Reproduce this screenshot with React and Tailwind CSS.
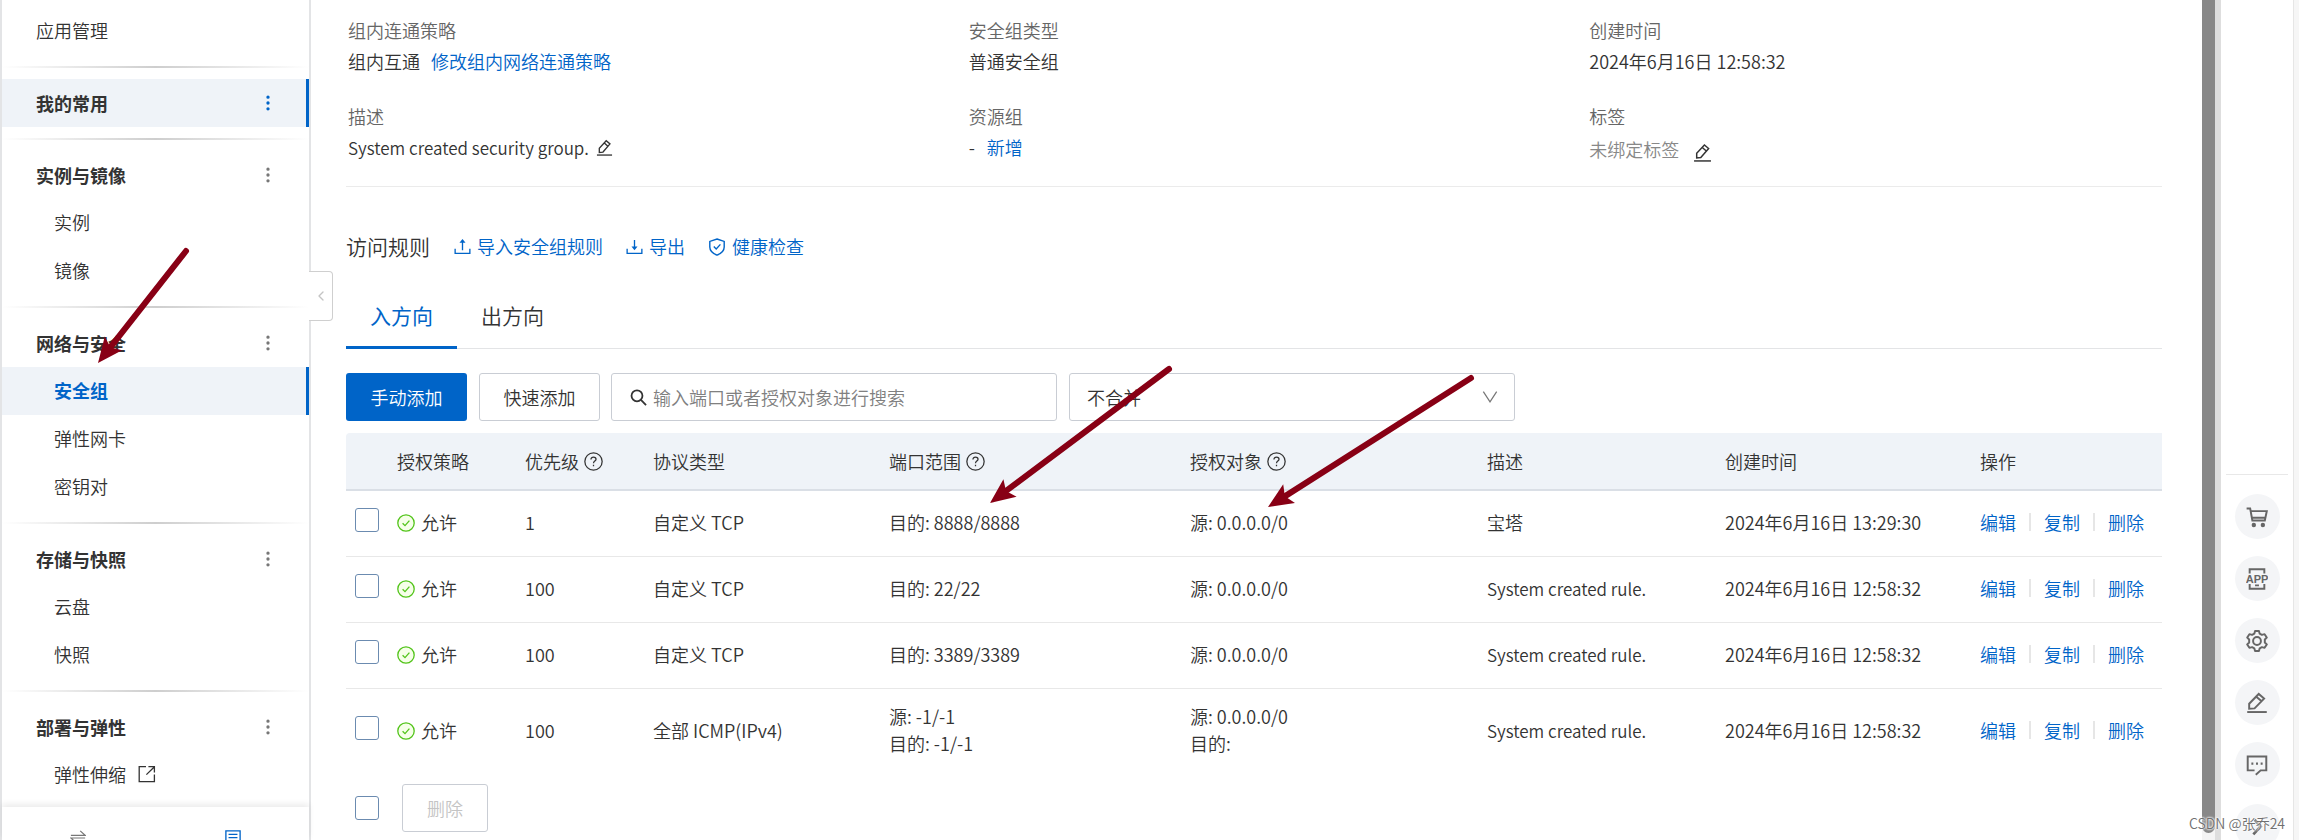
import React, { useState } from "react";
import { ChevronLeft, EllipsisVertical } from "lucide-react";

const navGroups = [
  { title: "实例与镜像", items: [{ name: "实例" }, { name: "镜像" }] },
  {
    title: "网络与安全",
    items: [{ name: "安全组", active: true }, { name: "弹性网卡" }, { name: "密钥对" }],
  },
  { title: "存储与快照", items: [{ name: "云盘" }, { name: "快照" }] },
  { title: "部署与弹性", items: [{ name: "弹性伸缩", external: true }] },
];

const rules = [
  { id: 1, priority: "1", protocol: "自定义 TCP", ports: ["目的: 8888/8888"], targets: ["源: 0.0.0.0/0"], desc: "宝塔", time: "2024年6月16日 13:29:30" },
  { id: 2, priority: "100", protocol: "自定义 TCP", ports: ["目的: 22/22"], targets: ["源: 0.0.0.0/0"], desc: "System created rule.", time: "2024年6月16日 12:58:32" },
  { id: 3, priority: "100", protocol: "自定义 TCP", ports: ["目的: 3389/3389"], targets: ["源: 0.0.0.0/0"], desc: "System created rule.", time: "2024年6月16日 12:58:32" },
  { id: 4, priority: "100", protocol: "全部 ICMP(IPv4)", ports: ["源: -1/-1", "目的: -1/-1"], targets: ["源: 0.0.0.0/0", "目的:"], desc: "System created rule.", time: "2024年6月16日 12:58:32" },
];

const columns = [
  { name: "授权策略", width: "w-[128px]" },
  { name: "优先级", width: "w-[128px]", help: true },
  { name: "协议类型", width: "w-[236px]" },
  { name: "端口范围", width: "w-[301px]", help: true },
  { name: "授权对象", width: "w-[297px]", help: true },
  { name: "描述", width: "w-[238px]" },
  { name: "创建时间", width: "w-[255px]" },
  { name: "操作", width: "w-[194px]" },
];

// small line icons, all stroked with the text colour
function Icon({ children, className = "", strokeWidth = 1.4 }) {
  return (
    <svg
      viewBox="0 0 18 18"
      fill="none"
      stroke="currentColor"
      strokeWidth={strokeWidth}
      className={`shrink-0 ${className}`}
      aria-hidden="true"
    >
      {children}
    </svg>
  );
}

function PencilIcon({ className, strokeWidth }) {
  return (
    <Icon className={className} strokeWidth={strokeWidth}>
      <path d="M3.5 14.2V9.8L10.8 1.8L14.8 5.2L7.4 13.8L3.5 14.2ZM8.8 4.2L12.6 7.6" />
      <path d="M1 17H17" />
    </Icon>
  );
}

function HelpIcon() {
  return (
    <Icon className="size-[19px]" strokeWidth={1.2}>
      <circle cx="9" cy="9" r="8.2" />
      <path d="M6.6 7.2C6.6 5.6 7.6 4.8 9 4.8C10.4 4.8 11.4 5.7 11.4 6.9C11.4 8.6 9 8.6 9 10.6M9 12V13.4" />
    </Icon>
  );
}

function AllowIcon() {
  return (
    <Icon className="mt-[2px] size-[18px] text-[#52c41a]" strokeWidth={1.3}>
      <circle cx="9" cy="9" r="8.2" fill="#f6ffe9" />
      <path d="M5.6 9.2L8 11.6L12.4 6.6" />
    </Icon>
  );
}

function Divider() {
  return (
    <div className="flex h-6 items-center">
      <div className="h-[2px] w-full bg-linear-to-r from-transparent via-[#cecece] to-transparent" />
    </div>
  );
}

function Checkbox({ label }) {
  return (
    <input
      type="checkbox"
      aria-label={label}
      className="block size-6 appearance-none rounded-[3px] border border-[#6b8bb0] bg-white checked:bg-[#0064c8]"
    />
  );
}

function Sidebar() {
  return (
    <aside className="relative flex w-[311px] shrink-0 flex-col border-r-2 border-l-2 border-[#e3e4e6]">
      <nav className="min-h-0 flex-1 overflow-hidden pt-[7px]">
        <a href="#app" className="flex h-12 items-center pb-[2px] pl-[34px]">应用管理</a>
        <Divider />
        <div className="flex h-12 items-center justify-between border-r-3 border-[#0064c8] bg-[#eff3f8] pr-7 pl-[34px] font-bold">
          <a href="#favorite">我的常用</a>
          <button type="button" aria-label="更多" className="text-[#0064c8]">
            <EllipsisVertical size={20} />
          </button>
        </div>
        {navGroups.map((group) => (
          <div key={group.title}>
            <Divider />
            <div className="flex h-12 items-center justify-between pr-[31px] pl-[34px]">
              <span className="font-bold">{group.title}</span>
              <button type="button" aria-label="更多" className="text-[#777]">
                <EllipsisVertical size={20} />
              </button>
            </div>
            {group.items.map((item) => (
              <a
                key={item.name}
                href={`#${item.name}`}
                className={`flex h-12 items-center gap-3 pb-[2px] pl-[52px] ${
                  item.active ? "border-r-3 border-[#0064c8] bg-[#eff3f8] font-bold text-[#0064c8]" : ""
                }`}
              >
                {item.name}
                {item.external && (
                  <Icon className="size-[18px]" strokeWidth={1.3}>
                    <path d="M8 1.7H1.2V16.6H16.4V9.5M10.4 1.7H16.4V7.4M16.2 2L8.4 9.6" />
                  </Icon>
                )}
              </a>
            ))}
          </div>
        ))}
      </nav>

      <div className="flex h-[33px] shrink-0 justify-between overflow-hidden px-[68px] pt-[23px] shadow-[0_-3px_6px_rgba(0,0,0,0.08)]">
        <button type="button" aria-label="切换" className="h-4 text-[#777]">
          <Icon className="size-4">
            <path d="M1 6H17L11.5 1M17 9H1L6.5 14" />
          </Icon>
        </button>
        <button type="button" aria-label="文档" className="h-4 text-[#0064c8]">
          <Icon className="size-4" strokeWidth={1.5}>
            <path d="M1 1H17V17H1ZM4 5H14M4 8.5H14M4 12H14" />
          </Icon>
        </button>
      </div>

      <button
        type="button"
        aria-label="收起"
        className="absolute top-[271px] left-full flex h-[50px] w-6 items-center justify-center rounded-r-sm border border-l-0 border-[#cfcfcf] bg-white text-[#c4c4c4]"
      >
        <ChevronLeft size={16} />
      </button>
    </aside>
  );
}

function Field({ label, children }) {
  return (
    <div>
      <dt className="h-[31px] leading-[31px] text-[#666]">{label}</dt>
      <dd className="flex h-[31px] items-center">{children}</dd>
    </div>
  );
}

function Details() {
  return (
    <dl className="grid grid-cols-3 gap-x-12 gap-y-6 border-b border-[#ebebeb] pt-[15px] pb-[23px] pl-[2px]">
      <Field label="组内连通策略">
        组内互通
        <a href="#policy" className="ml-[11px] text-[#0064c8]">修改组内网络连通策略</a>
      </Field>
      <Field label="安全组类型">普通安全组</Field>
      <Field label="创建时间">2024年6月16日 12:58:32</Field>
      <Field label="描述">
        <span className="text-[17px]">System created security group.</span>
        <button type="button" aria-label="编辑描述" className="ml-[7px]">
          <PencilIcon className="size-[17px]" />
        </button>
      </Field>
      <Field label="资源组">
        -<a href="#group" className="ml-3 text-[#0064c8]">新增</a>
      </Field>
      <Field label="标签">
        <span className="pt-1 text-[#888]">未绑定标签</span>
        <button type="button" aria-label="编辑标签" className="ml-[14px] pt-[10px]">
          <PencilIcon className="size-[19px]" />
        </button>
      </Field>
    </dl>
  );
}

function RulesHeader() {
  return (
    <div className="flex h-[119px] items-center text-[#0064c8]">
      <h2 className="mr-6 text-[21px] text-[#333]">访问规则</h2>
      <button type="button" className="mr-[23px] flex items-center gap-[6px]">
        <Icon className="size-[17px]">
          <path d="M1.2 11.5V16.2H16.8V11.5M9 13V3" />
          <path d="M5.8 5L9 1L12.2 5Z" fill="currentColor" stroke="none" />
        </Icon>
        导入安全组规则
      </button>
      <button type="button" className="mr-[23px] flex items-center gap-[6px]">
        <Icon className="size-[17px]">
          <path d="M1.2 11.5V16.2H16.8V11.5M9 2V11" />
          <path d="M5.8 9L9 13L12.2 9Z" fill="currentColor" stroke="none" />
        </Icon>
        导出
      </button>
      <button type="button" className="flex items-center gap-[6px]">
        <Icon className="size-[18px]">
          <path d="M9 1L16.2 3.4V9C16.2 12.8 13 15.6 9 17.2C5 15.6 1.8 12.8 1.8 9V3.4L9 1Z" />
          <path d="M5.8 8.6L8.2 11L12.4 6.4" />
        </Icon>
        健康检查
      </button>
    </div>
  );
}

function Tabs() {
  const [tab, setTab] = useState("入方向");

  return (
    <div role="tablist" className="mt-1 flex h-[39px] border-b border-[#e3e4e6] text-[21px]">
      {["入方向", "出方向"].map((name) => (
        <button
          key={name}
          type="button"
          role="tab"
          aria-selected={tab === name}
          onClick={() => setTab(name)}
          className={`-mt-6 -mb-px h-[63px] px-6 pb-[2px] ${
            tab === name ? "border-b-3 border-[#0064c8] font-normal text-[#0064c8]" : "border-b-3 border-transparent"
          }`}
        >
          {name}
        </button>
      ))}
    </div>
  );
}

function Toolbar() {
  return (
    <div className="mt-6 mb-3 flex">
      <button type="button" className="mr-3 h-12 w-[121px] rounded-[3px] bg-[#0064c8] text-white">手动添加</button>
      <button type="button" className="mr-[11px] h-12 w-[121px] rounded-[3px] border border-[#c9cdd4]">快速添加</button>
      <label className="mr-3 flex h-12 w-[446px] items-center gap-[6px] rounded-[3px] border border-[#c9cdd4] px-[18px]">
        <Icon className="size-[17px]" strokeWidth={1.9}>
          <circle cx="7.4" cy="7.2" r="5.8" />
          <path d="M11.6 11.6L17 17" />
        </Icon>
        <input
          type="text"
          aria-label="搜索"
          placeholder="输入端口或者授权对象进行搜索"
          className="min-w-0 flex-1 outline-none placeholder:text-[#808080]"
        />
      </label>
      <div className="relative w-[446px]">
        <select
          aria-label="合并方式"
          className="h-12 w-full appearance-none rounded-[3px] border border-[#c9cdd4] bg-white px-[17px]"
        >
          <option>不合并</option>
          <option>合并</option>
        </select>
        <Icon className="pointer-events-none absolute top-4 right-[17px] size-4 text-[#777]">
          <path d="M1.5 3L9 14.5L16.5 3" />
        </Icon>
      </div>
    </div>
  );
}

function RulesTable() {
  return (
    <table className="w-full table-fixed text-left leading-[27px]">
      <thead>
        <tr className="h-[57px] border-b-2 border-[#dadfe6] bg-[#eff3f8]">
          <td className="w-[39px] rounded-tl-sm" />
          {columns.map((col) => (
            <th key={col.name} scope="col" className={`pl-3 font-[350] ${col.width}`}>
              <span className="flex items-center gap-[5px]">
                {col.name}
                {col.help && <HelpIcon />}
              </span>
            </th>
          ))}
        </tr>
      </thead>
      <tbody>
        {rules.map((rule) => (
          <tr key={rule.id} className="h-[66px] border-b border-[#e8e8e8] last:h-[86px] last:border-0">
            <td className="pb-[6px] pl-[9px]">
              <Checkbox label={`选择规则 ${rule.id}`} />
            </td>
            <td className="pb-[2px] pl-3">
              <span className="flex items-center gap-[6px]">
                <AllowIcon />
                允许
              </span>
            </td>
            <td className="pb-[2px] pl-3">{rule.priority}</td>
            <td className="pb-[2px] pl-3">{rule.protocol}</td>
            <td className="pb-[2px] pl-3">
              {rule.ports.map((port) => <div key={port}>{port}</div>)}
            </td>
            <td className="pb-[2px] pl-3">
              {rule.targets.map((target) => <div key={target}>{target}</div>)}
            </td>
            <td className={`pb-[2px] pl-3 ${rule.desc.startsWith("System") ? "text-[17px]" : ""}`}>{rule.desc}</td>
            <td className="pb-[2px] pl-3">{rule.time}</td>
            <td className="pb-[2px] pl-3">
              <div className="flex items-center gap-[13px] whitespace-nowrap text-[#0064c8]">
                <button type="button">编辑</button>
                <span className="h-[18px] w-[2px] bg-[#e6e6e6]" />
                <button type="button">复制</button>
                <span className="h-[18px] w-[2px] bg-[#e6e6e6]" />
                <button type="button">删除</button>
              </div>
            </td>
          </tr>
        ))}
      </tbody>
    </table>
  );
}

const tools = [
  {
    name: "购物车",
    icon: (
      <>
        <path d="M0.5 2H3.4L5.2 11.8H15.4L17 4.2H4M4.8 9.6H15.6" />
        <circle cx="6.4" cy="15.6" r="1" fill="currentColor" />
        <circle cx="13.8" cy="15.6" r="1" fill="currentColor" />
      </>
    ),
  },
  {
    name: "手机应用",
    icon: (
      <>
        <path d="M3 4.6V1H15V4.6M3 13V17H15V13M7.4 14.2H10.6" />
        <text
          x="9"
          y="12"
          textAnchor="middle"
          fill="currentColor"
          stroke="none"
          className="font-['Liberation_Sans',sans-serif] text-[9px] font-bold"
        >
          APP
        </text>
      </>
    ),
  },
  {
    name: "设置",
    icon: (
      <>
        <circle cx="9" cy="9" r="3.2" />
        <path d="M7.4 0.8H10.6L11.2 3L13 4L15.2 3.4L17 6.2L15.4 7.8V10.2L17 11.8L15.2 14.6L13 14L11.2 15L10.6 17.2H7.4L6.8 15L5 14L2.8 14.6L1 11.8L2.6 10.2V7.8L1 6.2L2.8 3.4L5 4L6.8 3Z" strokeLinejoin="round" />
      </>
    ),
  },
  {
    name: "反馈",
    icon: (
      <>
        <path d="M2.6 13.6V9.6L10.4 1.6L14.8 5.4L7 13.4L2.6 13.6ZM8.4 3.8L12.6 7.4" />
        <path d="M1 16.4H17" />
      </>
    ),
  },
  {
    name: "咨询",
    icon: (
      <>
        <path d="M7 13.4H1.4V2H16.6V13.4H12L8 17" />
        <path d="M4.4 7.8H6M8.2 7.8H9.8M12 7.8H13.6" strokeWidth="1.8" />
      </>
    ),
  },
  { name: "展开", icon: <path d="M7 3L12 8.6L6 15" strokeWidth="2.2" /> },
];

function ToolRail() {
  return (
    <aside className="flex w-[73px] shrink-0 flex-col items-center gap-[17px] overflow-hidden border-r border-[#e6e6e6] pt-[474px]">
      <div className="mb-[2px] h-px w-[62px] shrink-0 bg-[#e8e8e8]" />
      {tools.map((tool) => (
        <button
          key={tool.name}
          type="button"
          aria-label={tool.name}
          className="flex size-[45px] shrink-0 items-center justify-center rounded-full bg-[#f4f5f7] text-[#666]"
        >
          <Icon className="size-[22px]" strokeWidth={1.6}>{tool.icon}</Icon>
        </button>
      ))}
    </aside>
  );
}

// hand-placed pointers over the console
function Arrows() {
  const arrows = [
    { from: [186, 251], to: [98, 363] },
    { from: [1169, 369], to: [990, 503] },
    { from: [1471, 378], to: [1268, 507] },
  ];

  return (
    <svg className="pointer-events-none absolute top-0 left-0 h-full w-full" aria-hidden="true">
      {arrows.map(({ from, to }) => {
        const length = Math.hypot(to[0] - from[0], to[1] - from[1]);
        const angle = (Math.atan2(to[1] - from[1], to[0] - from[0]) * 180) / Math.PI;
        return (
          <g key={to[0]} transform={`translate(${to[0]} ${to[1]}) rotate(${angle})`} fill="#880015">
            <path d={`M${-length} 0H-18`} stroke="#880015" strokeWidth="6" strokeLinecap="round" />
            <path d="M0 0L-25 -11L-20 0L-25 11Z" />
          </g>
        );
      })}
    </svg>
  );
}

export default function App() {
  return (
    <div className="relative flex h-screen overflow-hidden bg-white font-['Noto_Sans_CJK_SC',sans-serif] text-[18px] leading-[27px] font-[350] text-[#333]">
      <Sidebar />

      <main className="min-w-0 flex-1 overflow-hidden pr-10 pl-[35px]">
        <Details />
        <RulesHeader />
        <Tabs />
        <Toolbar />
        <RulesTable />
        <div className="flex items-center pt-[10px] pl-[9px]">
          <Checkbox label="全选" />
          <button
            type="button"
            disabled
            className="ml-[23px] h-12 w-[86px] rounded-[3px] border border-[#c9cdd4] text-[#c4c4c4]"
          >
            删除
          </button>
        </div>
      </main>

      <div className="flex w-[19px] shrink-0 border-r-6 border-[#dedede] bg-[#f4f4f4] pb-[7px]">
        <div className="w-[13px] rounded-b-full bg-[#888]" />
      </div>
      <ToolRail />
      <div className="w-[5px] shrink-0 bg-[#f6f6f6]" />

      <Arrows />
      <p className="absolute right-[14px] bottom-[5px] text-[14px] leading-6 text-[#707070] [text-shadow:0_0_2px_#fff,0_0_2px_#fff,0_0_3px_#fff]">
        CSDN @张乔24
      </p>
    </div>
  );
}
